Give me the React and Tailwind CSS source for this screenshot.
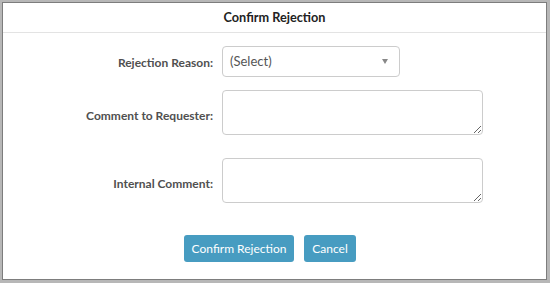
import React from "react";

function Field({ label, children, labelClass = "" }) {
  return (
    <div className="flex items-start">
      <label className={`w-[210px] shrink-0 text-right text-[12px] font-bold text-[#505050] ${labelClass}`}>
        {label}
      </label>
      <div className="ml-[9px]">{children}</div>
    </div>
  );
}

export default function App() {
  return (
    <div
      className="h-[283px] w-[550px] bg-[#b7b7b7] pl-[2px] pt-[2px] pr-[3px] pb-[3px]"
      style={{ fontFamily: 'Lato, sans-serif' }}
    >
      <div className="flex h-full flex-col border border-[#7d7d7d] bg-white">
        <div className="flex h-[30px] items-center justify-center border-b border-[#e3e3e3] text-[12.7px] font-bold text-[#222]">
          Confirm Rejection
        </div>

        <div className="mt-[13px] flex flex-col">
          <Field label="Rejection Reason:" labelClass="pt-[8px]">
            <div className="relative flex h-[31px] w-[178px] items-center rounded-[4px] border border-[#ccc] pl-[7px] text-[13px] text-[#555]">
              (Select)
              <span className="absolute right-[11px] top-[12px] h-0 w-0 border-x-[3px] border-t-[5px] border-x-transparent border-t-[#888]" />
            </div>
          </Field>

          <div className="mt-[13px]">
            <Field label="Comment to Requester:" labelClass="pt-[17px]">
              <textarea className="block h-[45px] w-[261px] rounded-[4px] border border-[#ccc] outline-none" />
            </Field>
          </div>

          <div className="mt-[23px]">
            <Field label="Internal Comment:" labelClass="pt-[17px]">
              <textarea className="block h-[45px] w-[261px] rounded-[4px] border border-[#ccc] outline-none" />
            </Field>
          </div>

          <div className="mt-[32px] flex justify-center gap-[10px] pr-[9px]">
            <button className="h-[27px] w-[110px] rounded-[3px] bg-[#479cc1] text-[12px] text-white">
              Confirm Rejection
            </button>
            <button className="h-[27px] w-[52px] rounded-[3px] bg-[#479cc1] text-[12px] text-white">
              Cancel
            </button>
          </div>
        </div>
      </div>
    </div>
  );
}
